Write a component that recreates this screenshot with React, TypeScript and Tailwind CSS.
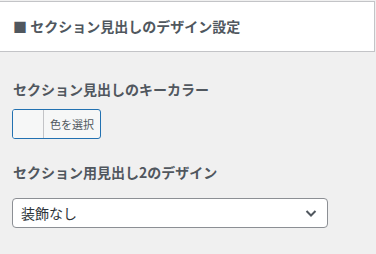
export default function App() {
	return (
		<div
			className="w-[376px] h-[254px] bg-[#f0f0f0] text-[#3c434a] overflow-hidden"
			style={{ fontFamily: '"Noto Sans CJK JP", "Noto Sans", sans-serif' }}
		>
			<div className="mt-px h-[51px] bg-white border-t border-b border-r border-[#c3c4c7] flex items-center px-[13px] w-[375px]">
				<h2 className="text-[14px] font-bold text-[#50575e] leading-none -mt-px">
					■ セクション見出しのデザイン設定
				</h2>
			</div>
			<div className="px-[12px] pt-[27px]">
				<div className="text-[14px] font-bold text-[#50575e] leading-5 pl-px">
					セクション見出しのキーカラー
				</div>
				<button className="mt-[10px] flex h-[30px] w-[89px] rounded-[3px] border border-[#2271b1] bg-[#f6f7f7] overflow-hidden">
					<span className="w-[31px] h-full bg-[#f6f7f7] border-r border-[#c3c4c7]" />
					<span className="flex-1 flex items-center pl-[6px] text-[11px] text-[#50575e]">
						色を選択
					</span>
				</button>
				<div className="mt-[23px] text-[14px] font-bold text-[#50575e] leading-5 pl-px">
					セクション用見出し2のデザイン
				</div>
				<div className="mt-[16px] flex items-center justify-between h-[30px] w-[316px] rounded-[4px] border border-[#8c8f94] bg-white pl-[8px] pr-[8px]">
					<span className="text-[14px] text-[#2c3338]">装飾なし</span>
					<svg width="16" height="16" viewBox="0 0 16 16" fill="none">
						<path
							d="M3.5 6l4.5 4.5L12.5 6"
							stroke="#50575e"
							strokeWidth="2"
						/>
					</svg>
				</div>
			</div>
		</div>
	);
}
